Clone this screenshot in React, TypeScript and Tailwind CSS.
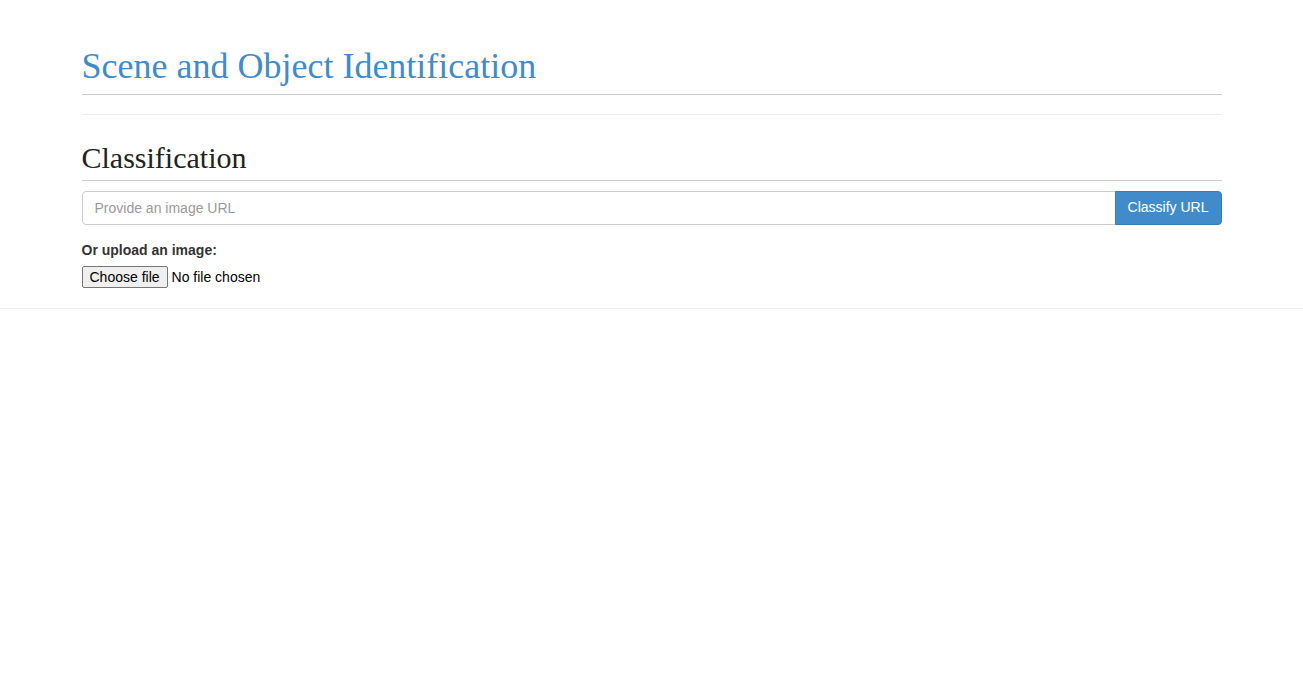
import { useRef, useState } from "react";

function App() {
	const [url, setUrl] = useState("");
	const [fileName, setFileName] = useState("");
	const fileRef = useRef<HTMLInputElement>(null);

	return (
		<div className="bg-white text-[#333] font-['Liberation_Sans',Arial,sans-serif] text-[14px]">
			<div className="border-b border-[#eee] pb-[20px]">
				<div className="w-[1140px] mx-auto">
					<h1 className="mt-[47px] pb-[7px] border-b border-[#ccc] text-[36px] leading-[1.1] text-[#428bca] font-['Liberation_Serif','Times_New_Roman',serif]">
						Scene and Object Identification
					</h1>
					<hr className="mt-[19px] border-t border-[#eee]" />

					<h2 className="mt-[26px] pb-[6px] border-b border-[#ccc] text-[30px] leading-[1.1] text-[#222] font-['Liberation_Serif','Times_New_Roman',serif]">
						Classification
					</h2>

					<div className="mt-[10px] flex">
						<input
							type="text"
							value={url}
							onChange={(e) => setUrl(e.target.value)}
							placeholder="Provide an image URL"
							className="flex-1 h-[34px] px-[12px] border border-[#ccc] rounded-l-[4px] text-[14px] text-[#555] placeholder:text-[#999] outline-none"
						/>
						<button
							type="button"
							className="h-[34px] px-[12px] bg-[#428bca] border border-[#357ebd] rounded-r-[4px] text-white text-[14px] -ml-px"
						>
							Classify URL
						</button>
					</div>

					<div className="mt-[15px]">
						<label className="block font-bold leading-[20px] mb-[6px]">Or upload an image:</label>
						<div className="flex items-baseline h-[22px]">
							<button
								type="button"
								onClick={() => fileRef.current?.click()}
								className="h-[22px] px-[7px] border border-[#767676] bg-[#efefef] rounded-[2px] text-[14px] text-black leading-none"
							>
								Choose file
							</button>
							<span className="ml-[4px] text-[14px] text-black">{fileName || "No file chosen"}</span>
							<input
								ref={fileRef}
								type="file"
								className="hidden"
								onChange={(e) => setFileName(e.target.files?.[0]?.name ?? "")}
							/>
						</div>
					</div>
				</div>
			</div>
		</div>
	);
}

export default App;
